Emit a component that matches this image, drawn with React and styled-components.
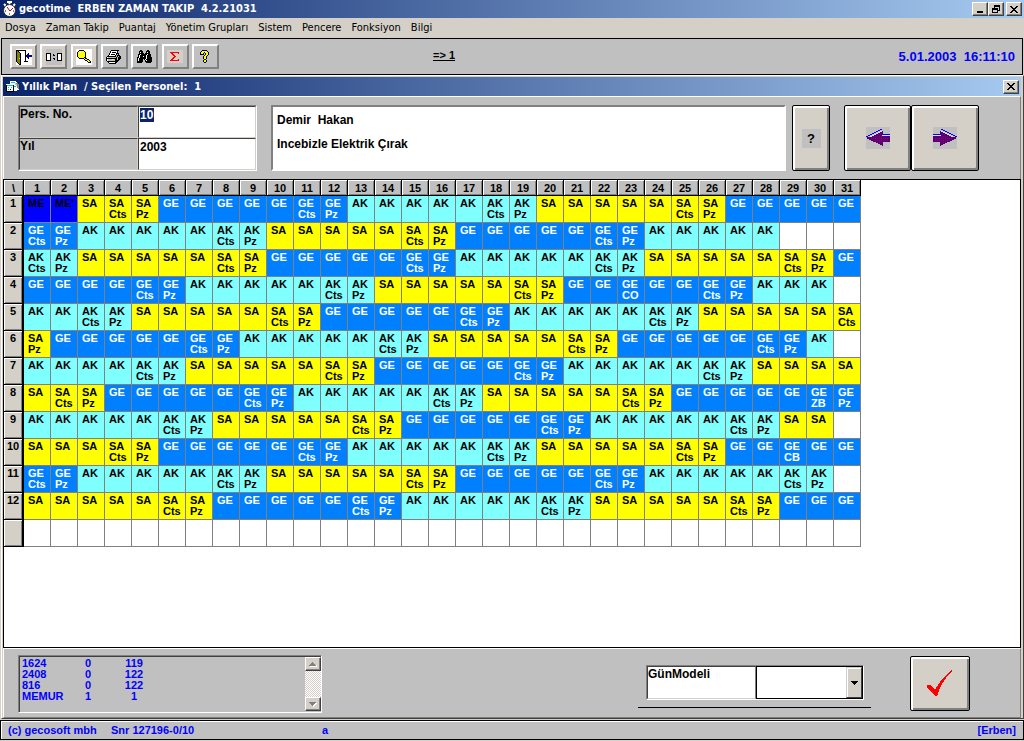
import React from "react";
import styled, { createGlobalStyle, css } from "styled-components";

const face = "#c0c0c0";
const btn = "#d4d0c8";
const form = `"Liberation Sans", Arial, sans-serif`;
const caption = `"DejaVu Sans Condensed", "DejaVu Sans", sans-serif`;

const GlobalStyle = createGlobalStyle`
  *, *::before, *::after { box-sizing: border-box; }
  body { margin: 0; background: #d4d0c8; font-family: ${form}; font-size: 12px; color: #000; }
  button, input, select { font: inherit; color: inherit; border-radius: 0; margin: 0; padding: 0; }
`;

const raised = css`
  border: 2px solid;
  border-color: #fff #808080 #808080 #fff;
`;
const sunken = css`
  border: 2px solid;
  border-color: #808080 #fff #fff #808080;
`;

/* ---------- frame ---------- */
const Screen = styled.div`
  display: flex;
  flex-direction: column;
  min-height: 100vh;
  padding-bottom: 1px;
`;
const TitleBar = styled.header`
  display: flex;
  align-items: center;
  height: 18px;
  padding: 0 2px;
  gap: 2px;
  color: #fff;
  font: bold 11px/18px ${caption};
  background: linear-gradient(90deg, #0a246a, #a6caf0);
`;
const Caption = styled.h1`
  flex: 1;
  margin: 0;
  font: inherit;
  white-space: pre;
`;
const SysButtons = styled.div`
  display: flex;
`;
const SysButton = styled.button`
  display: flex;
  align-items: center;
  justify-content: center;
  width: 16px;
  height: 14px;
  margin-left: ${(p) => (p.$apart ? "2px" : 0)};
  background: ${btn};
  border: 1px solid;
  border-color: #fff #404040 #404040 #fff;
  box-shadow: inset -1px -1px #808080;
`;
const MenuBar = styled.nav`
  display: flex;
  align-items: center;
  gap: 10px;
  height: 20px;
  padding: 0 5px;
  background: ${btn};
  font: 11px/20px ${caption};
`;
const MenuLink = styled.a`
  color: #000;
  text-decoration: none;
  white-space: nowrap;
`;
const ToolBar = styled.div`
  display: flex;
  align-items: center;
  height: 37px;
  margin: 0 1px;
  padding: 0 7px 0 8px;
  background: ${face};
  border: 1px solid #000;
`;
const Tools = styled.div`
  display: flex;
  justify-content: space-between;
  flex: 0 0 209px;
`;
const ToolButton = styled.button`
  display: flex;
  align-items: center;
  justify-content: center;
  width: 27px;
  height: 25px;
  background: ${(p) => (p.$grey ? face : btn)};
  ${raised}
`;
const Counter = styled.output`
  margin: 0 auto 4px 214px;
  font-size: 11px;
  line-height: 12px;
  font-weight: bold;
  text-decoration: underline;
`;
const Clock = styled.time`
  color: #00f;
  font-size: 13px;
  font-weight: bold;
  white-space: pre;
`;

/* ---------- plan window ---------- */
const PlanWindow = styled.main`
  display: flex;
  flex-direction: column;
  flex: 1;
  padding: 1px 2px 0 1px;
  border: 1px solid;
  border-color: #fff #404040 #404040 #fff;
  background: ${btn};
  margin: 0 0 1px 1px;
`;
const PlanTitle = styled(TitleBar)`
  height: 19px;
  padding-left: 3px;
`;
const Panel = styled.section`
  display: flex;
  align-items: flex-start;
  background: ${face};
  border: 1px solid;
  border-color: #fff #808080 #808080 #fff;
`;
const HeadPanel = styled(Panel)`
  height: 83px;
  padding: 8px 41px 0 14px;
  border-bottom: 0;
`;
const FootPanel = styled(Panel)`
  height: 70px;
  padding: 6px 50px 0 14px;
`;
const FieldBox = styled.div`
  display: grid;
  grid-template-columns: 119px 118px;
  grid-template-rows: 32px 32px;
  border: 1px solid;
  border-color: #808080 #fff #fff #808080;
`;
const fieldFrame = css`
  border: 1px solid;
  border-color: #404040 #d4d0c8 #d4d0c8 #404040;
  font-size: 12px;
  font-weight: bold;
`;
const FieldLabel = styled.label`
  ${fieldFrame}
  line-height: 14px;
`;
const FieldCell = styled.div`
  ${fieldFrame}
  background: #fff;
  padding: 1px;
`;
const FieldInput = styled.input`
  display: block;
  width: ${(p) => (p.$selected ? "14px" : "100%")};
  height: 14px;
  border: 0;
  outline: 0;
  font-weight: bold;
  line-height: 14px;
  color: ${(p) => (p.$selected ? "#fff" : "#000")};
  background: ${(p) => (p.$selected ? "#0a246a" : "#fff")};
`;
const PersonBox = styled.div`
  flex: 1;
  height: 66px;
  margin: 0 6px 0 14px;
  padding: 1px 4px;
  background: #fff;
  font-weight: bold;
  line-height: 24px;
  white-space: pre;
  ${sunken}
  p { margin: 0; }
`;
const BigButton = styled.button`
  display: flex;
  align-items: center;
  justify-content: center;
  width: ${(p) => p.$w}px;
  height: ${(p) => p.$h || 66}px;
  background: ${btn};
  border: 1px solid #000;
  border-radius: 2px;
  box-shadow: inset 2px 2px #fff, inset -2px -2px #808080;
`;
const HelpMark = styled.span`
  width: 19px;
  background: ${face};
  font-size: 13px;
  line-height: 19px;
  font-weight: bold;
`;
const Pager = styled.div`
  display: flex;
  margin-left: 14px;
`;
const GridPane = styled.section`
  flex: 1;
  background: #fff;
  border: 1px solid #000;
`;

/* ---------- year table ---------- */
const palette = {
  ME: ["#0000ff", "#000000"],
  SA: ["#ffff00", "#000000"],
  GE: ["#0080ff", "#ffffff"],
  AK: ["#80ffff", "#000000"],
};
const YearTable = styled.table`
  table-layout: fixed;
  width: 857px;
  border-spacing: 0;
  font-size: 11px;
  line-height: 11px;
  font-weight: bold;
`;
const ColHead = styled.th`
  width: ${(p) => (p.$corner ? 20 : 27)}px;
  height: 16px;
  padding: 0;
  background: ${face};
  border-right: 1px solid #000;
  border-bottom: 1px solid #000;
  box-shadow: inset 1px 1px #fff, inset -1px -1px #808080;
  line-height: 12px;
`;
const RowHead = styled.th`
  height: 27px;
  padding: 2px 0 0;
  vertical-align: top;
  background: ${btn};
  border-right: 2px solid #000;
  border-bottom: 1px solid #000;
  box-shadow: inset 1px 1px #fff, inset -1px -1px #808080;
`;
const Day = styled.td`
  height: 27px;
  padding: 2px 0 0 4px;
  vertical-align: top;
  white-space: pre;
  overflow: hidden;
  color: ${(p) => (p.$model ? palette[p.$model][1] : "#000")};
  background: ${(p) => (p.$model ? palette[p.$model][0] : "#fff")};
  border-right: 1px solid #808080;
  border-bottom: 1px solid #808080;
`;

/* ---------- foot ---------- */
const TotalsBox = styled.div`
  display: flex;
  width: 304px;
  height: 58px;
  border: 1px solid;
  border-color: #808080 #fff #fff #808080;
  box-shadow: inset 1px 1px #404040;
`;
const TotalsArea = styled.div`
  flex: 1;
  padding: 2px 0 0 3px;
`;
const Totals = styled.table`
  border-spacing: 0;
  color: #00f;
  font-size: 11px;
  font-weight: bold;
  line-height: 11px;
  th, td { padding: 0; }
  th { width: 56px; text-align: left; }
  td { width: 20px; text-align: center; }
  td + td { width: 72px; }
`;
const ScrollBar = styled.div`
  display: flex;
  flex-direction: column;
  justify-content: space-between;
  width: 16px;
  margin: 1px 0;
  background: repeating-conic-gradient(#fff 0 25%, ${btn} 0 50%) 0 0 / 2px 2px;
`;
const ModelGroup = styled.div`
  margin: 10px 0 0 auto;
  padding: 0 7px 7px 8px;
  border-bottom: 1px solid #000;
`;
const ModelBox = styled.div`
  display: flex;
  width: 218px;
  height: 35px;
  background: #fff;
  border: 1px solid;
  border-color: #808080 #fff #fff #808080;
`;
const ModelLabel = styled.label`
  width: 109px;
  ${fieldFrame}
  border-right: 1px solid #808080;
  line-height: 14px;
`;
const SelectWrap = styled.div`
  display: flex;
  flex: 1;
  border: 1px solid #000;
  position: relative;
`;
const ModelSelect = styled.select`
  appearance: none;
  width: 100%;
  border: 0;
  background: #fff;
  padding: 0 18px 0 4px;
  outline: 0;
`;
const SelectArrow = styled.span`
  position: absolute;
  top: 0;
  right: 0;
  bottom: 0;
  width: 16px;
  display: flex;
  align-items: center;
  justify-content: center;
  pointer-events: none;
  background: ${btn};
  border: 1px solid;
  border-color: ${btn} #404040 #404040 ${btn};
  box-shadow: inset 1px 1px #fff;
`;
const ApplySlot = styled.div`
  display: flex;
  margin: 1px 0 0 39px;
`;
const StatusBar = styled.footer`
  display: flex;
  align-items: center;
  height: 20px;
  padding: 0 7px;
  background: ${face};
  border: 1px solid #000;
  box-shadow: inset 1px 1px #fff;
  color: #00f;
  font-size: 11px;
  font-weight: bold;
`;
const StatusItem = styled.span`
  min-width: ${(p) => p.$w || 0}px;
  margin-left: ${(p) => (p.$end ? "auto" : 0)};
`;

/* ---------- icons ---------- */
const inks = {
  k: "#000000", w: "#ffffff", y: "#ffff00", o: "#808000", b: "#000080",
  g: "#808080", s: "#c0c0c0", c: "#00c8d8", r: "#ff0000",
};
function Bitmap({ rows, bg }) {
  const w = Math.max(...rows.map((r) => r.length));
  const rects = [];
  rows.forEach((row, y) => {
    for (let x = 0; x < row.length; ) {
      let end = x + 1;
      while (end < row.length && row[end] === row[x]) end++;
      if (inks[row[x]]) rects.push(<rect key={`${x}-${y}`} x={x} y={y} width={end - x} height="1" fill={inks[row[x]]} />);
      x = end;
    }
  });
  return (
    <svg width={w} height={rows.length} shapeRendering="crispEdges" aria-hidden="true">
      {bg && <rect width={w} height={rows.length} fill={bg} />}
      {rects}
    </svg>
  );
}

const icons = {
  door: [
    "................",
    "kkkkkkkkkk......",
    "kok......k......",
    "kook.....k......",
    "koook....k..b...",
    "koook....k.bb...",
    "koook....kbbbbbb",
    "koook....kbbbbbb",
    "koook....k.bb...",
    "kooyk....k..b...",
    "koook....k......",
    "koook....k......",
    "koook...kkkk....",
    ".kook...........",
    "..kok...........",
    "...kk...........",
  ],
  counter: [
    "................",
    "................",
    "................",
    "................",
    "kkkkk......kkkkk",
    "kwwwk..k...kwwwk",
    "kwwwk..kk..kwwwk",
    "kwwwk......kwwwk",
    "kwwwk......kwwwk",
    "kwwwk..kk..kwwwk",
    "kwwwk...k..kwwwk",
    "kkkkk......kkkkk",
    "................",
    "................",
    "................",
    "................",
  ],
  lens: [
    "................",
    "...kkkkk........",
    "..kyyyyyk.......",
    ".kyywyyyyk......",
    ".kywyyyyyk......",
    ".kyyyyyyyk......",
    ".kyyyyyyyk......",
    ".kyyyyyyyk......",
    "..kyyyyykk......",
    "...kkkkkykk.....",
    "........kyykk...",
    ".........kkyyk..",
    "...........kyyk.",
    "............kkk.",
    "................",
    "................",
  ],
  printer: [
    ".....kkkkkkkk...",
    "....kwwwwwwk....",
    "....kwkkkkwk....",
    "...kwwwwwwkkk...",
    "...kwkkkkwksk...",
    "..kwwwwwwkskkk..",
    ".kkkkkkkkkskskk.",
    "kwsssssssskskkk.",
    "kkkkkkkkkkkskkk.",
    "kwssssyyskkskk..",
    "kwssssssskkkk...",
    ".kkkkkkkkkkk....",
    "..kwwwwwwkk.....",
    "...kkkkkkk......",
  ],
  binoculars: [
    "...kk.....kk....",
    "..kkkk...kkkk...",
    "..kwkk...kwkk...",
    "..kkkkk.kkkkk...",
    ".kkwkkkkkkwkkk..",
    ".kwkkkkkkwkkkk..",
    ".kwkkkwkkwkkkk..",
    "kkwkkkkkkwkkkkk.",
    "kwkkkkkkkwkkkkk.",
    "kwkkkkskwkkkkkk.",
    "kwkkkk..kwkkkkk.",
    "kkkkkk..kkkkkkk.",
    "kkkkk....kkkkk..",
  ],
  sigma: [
    "................",
    "................",
    "...rrrrrrrrr....",
    "....rr.....r....",
    ".....rr.........",
    "......rr........",
    ".......rr.......",
    "......rr........",
    ".....rr.........",
    "....rr.....r....",
    "...rrrrrrrrr....",
    "................",
    "................",
  ],
  help: [
    "...kkkkk....",
    "..kyyyyyk...",
    ".kyyykyyyk..",
    ".kyyk.kyyk..",
    ".kkkk.kyyk..",
    ".....kyyk...",
    "....kyyk....",
    "....kyyk....",
    "....kyyk....",
    ".....kk.....",
    "....kyyk....",
    "....kyyk....",
    ".....kk.....",
  ],
  planner: [
    "....wwwwww....",
    "....wccccww...",
    "....wwwwwsgg..",
    "wwwwwwwwwssgg.",
    "kcccccckwwsgg.",
    "kwwwwwwkccwgg.",
    "kwcwwcwkwwwgg.",
    "kwwwwwwkwwwwg.",
    "kwcwkwwkwwwww.",
    "kwwwwwwkwww...",
    "kkkkkkkk......",
  ],
  minimize: ["........", "........", "........", "........", "........", ".kkkkkk.", ".kkkkkk."],
  restore: ["..kkkkkk", "..kkkkkk", "..k....k", "kkkkkk.k", "kkkkkk.k", "k....kkk", "k....k..", "kkkkkk.."],
  close: ["kk....kk", ".kk..kk.", "..kkkk..", "...kk...", "..kkkk..", ".kk..kk.", "kk....kk"],
  down: ["kkkkkkk", ".kkkkk.", "..kkk..", "...k..."],
  scrollUp: ["...g....", "..ggg...", ".ggggg..", "gggggggw", ".wwwwwww"],
  scrollDown: ["ggggggg.", ".gggggww", "..gggww.", "...gww..", "....w..."],
};

const StopwatchIcon = () => (
  <svg width="15" height="17" viewBox="0 0 15 17" aria-hidden="true">
    <path d="M5 1h5M7.5 1v3M2 3l2 2M13 3l-2 2" stroke="#fff" strokeWidth="2" />
    <circle cx="7.500" cy="9.500" r="6" fill="#fff" stroke="#222" />
    <path d="M5 6l3 4 3-3" stroke="#c00000" fill="none" />
    <path d="M3 10h1M11 10h1M7 13h1" stroke="#000" />
  </svg>
);
const ArrowIcon = ({ right }) => (
  <svg width="24" height="22" viewBox="0 0 24 22" shapeRendering="crispEdges" aria-hidden="true">
    <rect width="24" height="22" fill={face} />
    <g transform={right ? "translate(24 0) scale(-1 1)" : undefined}>
      <path d="M0 11L17 4v5h7v6h-7v4z" fill="#580070" />
      <path d="M7 9.500h10M5 11.500h18M9 13.500h14M11 15.500h6M12 7.500h5" stroke="#900078" strokeDasharray="1 1" fill="none" />
      <path d="M0 10L16 2" stroke="#0000ff" fill="none" />
      <path d="M4 10L16 4M16 8.500h8" stroke="#e0e0e8" fill="none" />
      <path d="M16 7.500h8" stroke="#0000ff" fill="none" />
    </g>
  </svg>
);
const CheckIcon = () => (
  <svg width="26" height="27" viewBox="0 0 26 27" shapeRendering="crispEdges" aria-hidden="true">
    <path d="M0 15h3l5 5C12 12 18 5 25 0v1C18 8 13 16 10 26H8L0 17z" fill="#f00" />
  </svg>
);

/* ---------- data ---------- */
const YEAR = 2003;
const WEEK_MODELS = ["SA", "GE", "AK"];
const NOTES = { "4-23": "CO", "8-30": "ZB", "10-29": "CB" };
const DAYS = Array.from({ length: 31 }, (_, i) => i + 1);
const MONTHS = Array.from({ length: 12 }, (_, i) => i + 1);

function dayEntry(month, day) {
  if (day > new Date(YEAR, month, 0).getDate()) return null;
  if (month === 1 && day < 3) return { model: "ME", text: day === 1 ? "ME" : "ME'" };
  const date = Date.UTC(YEAR, month - 1, day);
  const index = Math.round((date - Date.UTC(YEAR, 0, 1)) / 86400000);
  const model = WEEK_MODELS[Math.floor((index + 2) / 7) % 3];
  const weekday = new Date(date).getUTCDay();
  const note = NOTES[`${month}-${day}`] || (weekday === 6 ? "Cts" : weekday === 0 ? "Pz" : "");
  return { model, text: `${model}\n${note}` };
}

const MENU = ["Dosya", "Zaman Takip", "Puantaj", "Yönetim Grupları", "Sistem", "Pencere", "Fonksiyon", "Bilgi"];
const TOOLS = [
  ["door", "Çıkış", "#fff"],
  ["counter", "Sayaç", face],
  ["lens", "Ara", "#fff"],
  ["printer", "Yazdır", null, true],
  ["binoculars", "Bul", null, true],
  ["sigma", "Toplam", "#d4d0c8", true],
  ["help", "Yardım", null, true],
];
const TOTALS = [
  ["1624", 0, 119],
  ["2408", 0, 122],
  ["816", 0, 122],
  ["MEMUR", 1, 1],
];

export default function App() {
  return (
    <Screen>
      <GlobalStyle />
      <TitleBar>
        <StopwatchIcon />
        <Caption>{"gecotime  ERBEN ZAMAN TAKIP  4.2.21031"}</Caption>
        <SysButtons>
          <SysButton aria-label="Minimize"><Bitmap rows={icons.minimize} /></SysButton>
          <SysButton aria-label="Restore"><Bitmap rows={icons.restore} /></SysButton>
          <SysButton $apart aria-label="Close"><Bitmap rows={icons.close} /></SysButton>
        </SysButtons>
      </TitleBar>
      <MenuBar>
        {MENU.map((m) => <MenuLink key={m} href="#">{m}</MenuLink>)}
      </MenuBar>
      <ToolBar>
        <Tools>
          {TOOLS.map(([name, label, bg, grey]) => (
            <ToolButton key={name} $grey={grey} aria-label={label}>
              <Bitmap rows={icons[name]} bg={bg} />
            </ToolButton>
          ))}
        </Tools>
        <Counter>=&gt; 1</Counter>
        <Clock>{"5.01.2003  16:11:10"}</Clock>
      </ToolBar>

      <PlanWindow>
        <PlanTitle as="div">
          <Bitmap rows={icons.planner} />
          <Caption as="h2">{"Yıllık Plan  / Seçilen Personel:  1"}</Caption>
          <SysButton aria-label="Close plan"><Bitmap rows={icons.close} /></SysButton>
        </PlanTitle>
        <HeadPanel>
          <FieldBox>
            <FieldLabel htmlFor="pers">Pers. No.</FieldLabel>
            <FieldCell><FieldInput id="pers" $selected defaultValue="10" /></FieldCell>
            <FieldLabel htmlFor="year">Yıl</FieldLabel>
            <FieldCell><FieldInput id="year" defaultValue="2003" /></FieldCell>
          </FieldBox>
          <PersonBox>
            <p>{"Demir  Hakan"}</p>
            <p>Incebizle Elektrik Çırak</p>
          </PersonBox>
          <BigButton $w={38}><HelpMark>?</HelpMark></BigButton>
          <Pager>
            <BigButton $w={67} aria-label="Previous"><ArrowIcon /></BigButton>
            <BigButton $w={68} aria-label="Next"><ArrowIcon right /></BigButton>
          </Pager>
        </HeadPanel>
        <GridPane>
          <YearTable>
            <thead>
              <tr>
                <ColHead $corner>\</ColHead>
                {DAYS.map((d) => <ColHead key={d} scope="col">{d}</ColHead>)}
              </tr>
            </thead>
            <tbody>
              {MONTHS.map((m) => (
                <tr key={m}>
                  <RowHead scope="row">{m}</RowHead>
                  {DAYS.map((d) => {
                    const entry = dayEntry(m, d);
                    return <Day key={d} $model={entry?.model}>{entry?.text}</Day>;
                  })}
                </tr>
              ))}
              <tr>
                <RowHead />
                {DAYS.map((d) => <Day key={d} />)}
              </tr>
            </tbody>
          </YearTable>
        </GridPane>
        <FootPanel>
          <TotalsBox>
            <TotalsArea>
              <Totals>
                <tbody>
                  {TOTALS.map(([name, a, b]) => (
                    <tr key={name}><th scope="row">{name}</th><td>{a}</td><td>{b}</td></tr>
                  ))}
                </tbody>
              </Totals>
            </TotalsArea>
            <ScrollBar>
              <SysButton aria-label="Scroll up"><Bitmap rows={icons.scrollUp} /></SysButton>
              <SysButton aria-label="Scroll down"><Bitmap rows={icons.scrollDown} /></SysButton>
            </ScrollBar>
          </TotalsBox>
          <ModelGroup>
            <ModelBox>
              <ModelLabel htmlFor="model">GünModeli</ModelLabel>
              <SelectWrap>
                <ModelSelect id="model" defaultValue="">
                  <option value=""></option>
                  <option>AK</option>
                  <option>GE</option>
                  <option>SA</option>
                </ModelSelect>
                <SelectArrow><Bitmap rows={icons.down} /></SelectArrow>
              </SelectWrap>
            </ModelBox>
          </ModelGroup>
          <ApplySlot>
            <BigButton $w={60} $h={55} aria-label="Apply"><CheckIcon /></BigButton>
          </ApplySlot>
        </FootPanel>
      </PlanWindow>
      <StatusBar>
        <StatusItem $w={103}>(c) gecosoft mbh</StatusItem>
        <StatusItem $w={211}>Snr 127196-0/10</StatusItem>
        <StatusItem>a</StatusItem>
        <StatusItem $end>[Erben]</StatusItem>
      </StatusBar>
    </Screen>
  );
}
